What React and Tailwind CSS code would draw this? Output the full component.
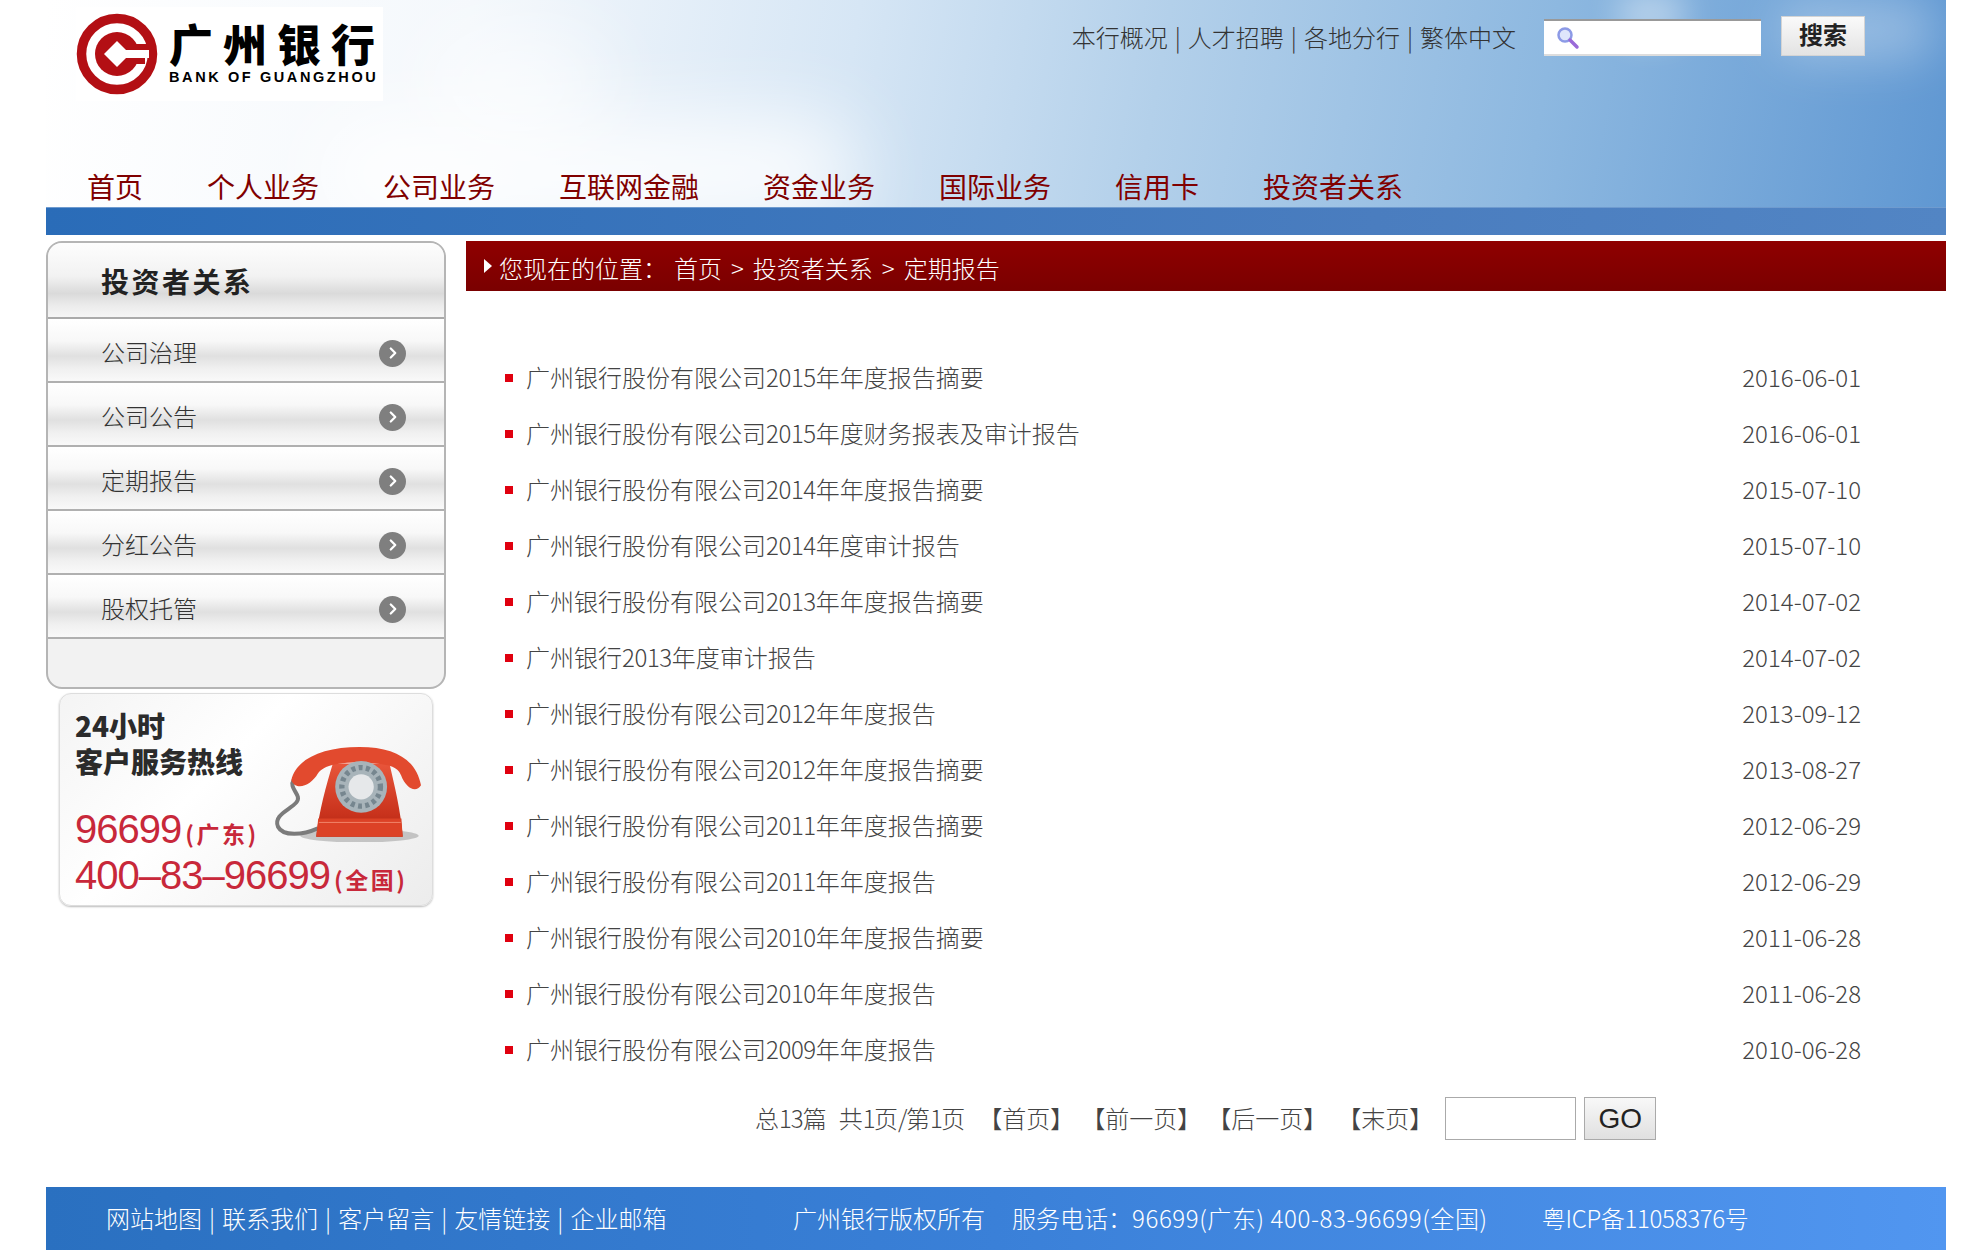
import React from "react";
import { ChevronRight } from "lucide-react";

const FONT = '"Noto Sans CJK SC", "Noto Sans", sans-serif';
const ARIAL = '"Liberation Sans", sans-serif';
const LOGO_FONT = '"Liberation Sans", "Noto Sans CJK SC", sans-serif';

const NAV_ITEMS = ["首页", "个人业务", "公司业务", "互联网金融", "资金业务", "国际业务", "信用卡", "投资者关系"];
const SIDE_ITEMS = ["公司治理", "公司公告", "定期报告", "分红公告", "股权托管"];
const REPORTS = [
  ["广州银行股份有限公司2015年年度报告摘要", "2016-06-01"],
  ["广州银行股份有限公司2015年度财务报表及审计报告", "2016-06-01"],
  ["广州银行股份有限公司2014年年度报告摘要", "2015-07-10"],
  ["广州银行股份有限公司2014年度审计报告", "2015-07-10"],
  ["广州银行股份有限公司2013年年度报告摘要", "2014-07-02"],
  ["广州银行2013年度审计报告", "2014-07-02"],
  ["广州银行股份有限公司2012年年度报告", "2013-09-12"],
  ["广州银行股份有限公司2012年年度报告摘要", "2013-08-27"],
  ["广州银行股份有限公司2011年年度报告摘要", "2012-06-29"],
  ["广州银行股份有限公司2011年年度报告", "2012-06-29"],
  ["广州银行股份有限公司2010年年度报告摘要", "2011-06-28"],
  ["广州银行股份有限公司2010年年度报告", "2011-06-28"],
  ["广州银行股份有限公司2009年年度报告", "2010-06-28"],
];

// digits in the original font run narrower than the CJK fallback's
function Narrow({ text, className }) {
  return text.split(/([0-9A-Za-z\-/().]+)/).map((part, i) =>
    i % 2 ? (
      <span key={i} className={className}>
        {part}
      </span>
    ) : (
      part
    )
  );
}

function LogoMark() {
  return (
    <svg width="82" height="82" viewBox="0 0 82 82" className="shrink-0">
      <circle cx="41" cy="41" r="35.5" fill="none" stroke="#b30f14" strokeWidth="9.5" />
      <circle cx="41" cy="41" r="22" fill="#b30f14" />
      <rect x="52" y="31" width="21" height="6" fill="#b30f14" />
      <rect x="52" y="45" width="17" height="6" fill="#b30f14" />
      <rect x="48" y="37" width="25" height="8" fill="#fff" />
      <path d="M41 28 L54 41 L41 54 L28 41 Z" fill="#fff" />
    </svg>
  );
}

function Phone() {
  return (
    <svg width="153" height="97" viewBox="700 180 460 290">
      <defs>
        <linearGradient id="phoneBody" x1="0" y1="0" x2="0" y2="1">
          <stop offset="0" stopColor="#e8553a" />
          <stop offset="0.7" stopColor="#c8321c" />
          <stop offset="1" stopColor="#a82614" />
        </linearGradient>
      </defs>
      <ellipse cx="960" cy="452" rx="178" ry="20" fill="#8c8c8c" opacity="0.45" />
      <path d="M762 285 C745 310 790 330 770 352 C750 375 700 390 715 425 C730 455 790 450 835 430" fill="none" stroke="#7b7b7b" strokeWidth="12" />
      <path d="M880 235 L1050 235 C1065 300 1085 380 1090 455 L830 455 C838 380 860 300 880 235 Z" fill="url(#phoneBody)" />
      <path d="M836 400 L1086 400 L1090 455 L830 455 Z" fill="#dc4226" />
      <path d="M838 412 L1084 412" stroke="#f08468" strokeWidth="3" />
      <path d="M755 285 C770 220 850 185 960 185 C1070 185 1130 225 1145 300 C1130 325 1100 310 1085 270 C1075 245 1050 235 960 232 C880 232 850 245 835 265 C815 300 770 320 755 285 Z" fill="#e24a2e" />
      <circle cx="965" cy="305" r="78" fill="#a8b4ba" />
      <circle cx="965" cy="305" r="58" fill="none" stroke="#76868f" strokeWidth="16" strokeDasharray="12 10" />
      <circle cx="965" cy="305" r="38" fill="#e6e8ea" />
    </svg>
  );
}

export default function App() {
  return (
    <div className="w-[1981px] h-[1256px] bg-white pl-[46px] overflow-hidden text-[24px]" style={{ fontFamily: FONT }}>
      <div className="w-[1900px]">
        {/* Header */}
        <header className="relative h-[235px] overflow-hidden bg-[linear-gradient(100deg,#ffffff_0%,#f4f8fc_22%,#d6e6f5_42%,#b3d0ea_58%,#8db8e0_78%,#5f97d2_100%)]">
          <div className="absolute left-[270px] top-[118px] w-[540px] h-[110px] rounded-full bg-white/85 blur-2xl" />
          <div className="absolute left-[380px] top-[30px] w-[180px] h-[110px] rounded-full bg-white/60 blur-2xl" />
          <div className="absolute left-[1570px] top-[-10px] w-[70px] h-[50px] rounded-full bg-white/40 blur-lg" />
          <div className="absolute right-[10px] top-0 w-[160px] h-[60px] rounded-full bg-white/30 blur-xl" />

          <div className="relative h-[207px] flex flex-col">
            <div className="flex items-start">
              <div className="ml-[30px] mt-[7px] w-[307px] h-[94px] bg-white flex items-center gap-[11px]">
                <LogoMark />
                <div className="flex flex-col text-black leading-none" style={{ fontFamily: LOGO_FONT }}>
                  <span className="text-[44px] font-black tracking-[10px] leading-[46px] whitespace-nowrap">广州银行</span>
                  <span className="text-[14.5px] font-bold tracking-[2.6px] whitespace-nowrap">BANK OF GUANGZHOU</span>
                </div>
              </div>
              <div className="ml-auto mr-[81px] mt-[16px] flex items-start">
                <div className="mt-[3px] mr-[28px] text-[#333] font-light flex gap-[7px]">
                  <span>本行概况</span>|<span>人才招聘</span>|<span>各地分行</span>|<span>繁体中文</span>
                </div>
                <div className="mt-[3px] w-[217px] h-[37px] bg-white border-t-2 border-t-[#999] border-b-2 border-b-[#ddd] flex items-center pl-[12px]">
                  <svg width="24" height="24" viewBox="0 0 24 24">
                    <circle cx="9" cy="9" r="6.5" fill="#dfe6fb" stroke="#8c9ae6" strokeWidth="2.5" />
                    <path d="M14 14 L21 21" stroke="#9a6ad8" strokeWidth="3.5" strokeLinecap="round" />
                  </svg>
                </div>
                <button className="ml-[20px] w-[84px] h-[40px] pb-[4px] bg-[linear-gradient(#fafafa,#e3e3e3)] border border-[#d4d4d4] text-[24px] font-bold text-[#222] leading-none">
                  搜索
                </button>
              </div>
            </div>
            <nav className="mt-auto ml-[41px] flex gap-[64px] text-[28px] leading-[42px] text-[#800000]">
              {NAV_ITEMS.map((item) => (
                <span key={item}>{item}</span>
              ))}
            </nav>
          </div>
          <div className="relative h-[28px] bg-[linear-gradient(90deg,#2a6cb8,#4a7dbf_70%,#5285c4)] border-t border-t-[#6f9bcf]" />
        </header>

        {/* Body */}
        <div className="mt-[6px] flex items-start">
          <aside className="w-[400px] shrink-0">
            <div className="h-[448px] rounded-[16px] border-2 border-[#b5b5b5] bg-[#f2f2f2] overflow-hidden flex flex-col">
              <div className="h-[76px] shrink-0 border-b-2 border-[#aaa] pl-[53px] pt-[1px] flex items-center bg-[linear-gradient(#fdfdfd_0%,#f2f2f2_45%,#dadada_68%,#ececec_85%,#f5f5f5_100%)]">
                <span className="text-[28px] font-bold text-[#222] tracking-[2.5px]">投资者关系</span>
              </div>
              {SIDE_ITEMS.map((item) => (
                <div
                  key={item}
                  className="h-[64px] shrink-0 border-b-2 border-[#b0b0b0] pl-[53px] pr-[38px] flex items-center justify-between bg-[linear-gradient(#ffffff_0%,#f8f8f8_35%,#e0e0e0_60%,#f0f0f0_80%,#f9f9f9_100%)]"
                >
                  <span className="mt-[3px] font-light text-[#333]">{item}</span>
                  <span className="mt-[6px] w-[27px] h-[27px] rounded-full bg-[#7f7f7f] flex items-center justify-center">
                    <ChevronRight className="w-[18px] h-[18px] text-white" strokeWidth={3} />
                  </span>
                </div>
              ))}
            </div>
            <div className="relative mt-[4px] ml-[13px] w-[374px] h-[213px] rounded-[12px] border border-[#ddd] bg-[linear-gradient(135deg,#f4f4f4,#ffffff_40%,#ececec)] shadow-[0_1px_2px_#bbb] overflow-hidden px-[15px] pt-[13px]">
              <div className="text-[28px] leading-[36px] font-black text-[#2b2b2b]">24小时</div>
              <div className="text-[28px] leading-[36px] font-black text-[#2b2b2b]">客户服务热线</div>
              <div className="mt-[29px] flex items-baseline text-[#c8283a] leading-[42px]">
                <span className="text-[40px] tracking-[-1px]" style={{ fontFamily: ARIAL }}>96699</span>
                <span className="ml-[4px] text-[23px] font-bold tracking-[2.5px]">(广东)</span>
              </div>
              <div className="flex items-baseline text-[#c8283a] leading-[42px]">
                <span className="text-[40px] tracking-[-1px]" style={{ fontFamily: ARIAL }}>400–83–96699</span>
                <span className="ml-[4px] text-[23px] font-bold tracking-[2.5px]">(全国)</span>
              </div>
              <div className="absolute left-[213px] top-[51px]">
                <Phone />
              </div>
            </div>
          </aside>

          <main className="ml-[20px] flex-1">
            <div className="h-[50px] pl-[18px] flex items-center text-white font-light bg-[linear-gradient(#8f0000,#7a0000)]">
              <span className="w-0 h-0 mr-[7px] border-y-[7px] border-y-transparent border-l-[8px] border-l-white" />
              <span className="pt-[3px] flex">
                <span>您现在的位置：</span>
                <span className="ml-[7px] flex gap-[9px]">
                  <span>首页</span>
                  <span>&gt;</span>
                  <span>投资者关系</span>
                  <span>&gt;</span>
                  <span>定期报告</span>
                </span>
              </span>
            </div>

            <ul className="mt-[58px] pl-[39px] pr-[85px]">
              {REPORTS.map(([title, date], i) => (
                <li key={i} className="h-[56px] flex items-center text-[#444] font-light">
                  <span className="mt-[1px] w-[8px] h-[8px] bg-[#e0000f] mr-[13px] shrink-0" />
                  <span>
                    <Narrow text={title} className="tracking-[-0.4px]" />
                  </span>
                  <span className="ml-auto">{date}</span>
                </li>
              ))}
            </ul>

            <div className="mt-[20px] pl-[289px] flex items-center text-[#444] font-light">
              <span className="mt-[-2px]">
                <Narrow text="总13篇" className="tracking-[-1px]" />
              </span>
              <span className="mt-[-2px] ml-[12px]">
                <Narrow text="共1页/第1页" className="tracking-[-1.5px]" />
              </span>
              <span className="mt-[-2px] ml-[13px] flex">
                <span>【首页】</span>
                <span className="ml-[7px]">【前一页】</span>
                <span className="ml-[6px]">【后一页】</span>
                <span className="ml-[10px]">【末页】</span>
              </span>
              <input className="ml-[12px] w-[131px] h-[43px] border border-[#aaa] bg-white" />
              <button className="ml-[8px] w-[72px] h-[43px] border border-[#aaa] bg-[linear-gradient(#f8f8f8,#e0e0e0)] text-[28px] text-[#222] leading-none" style={{ fontFamily: ARIAL }}>
                GO
              </button>
            </div>
          </main>
        </div>

        {/* Footer */}
        <footer className="absolute left-[46px] top-[1187px] w-[1900px] h-[63px] pb-[2px] text-white font-light flex items-center bg-[linear-gradient(90deg,#2a70c0,#3a80d8_50%,#5196f0)]">
          <div className="ml-[60px] flex gap-[7px] w-[687px]">
            <span>网站地图</span>|<span>联系我们</span>|<span>客户留言</span>|<span>友情链接</span>|<span>企业邮箱</span>
          </div>
          <span>广州银行版权所有</span>
          <span className="ml-[27px]">
            服务电话：<span className="tracking-[0.6px]">96699(广东) 400-83-96699(全国)</span>
          </span>
          <span className="ml-[54px] tracking-[-0.3px]">粤ICP备11058376号</span>
        </footer>
      </div>
    </div>
  );
}
